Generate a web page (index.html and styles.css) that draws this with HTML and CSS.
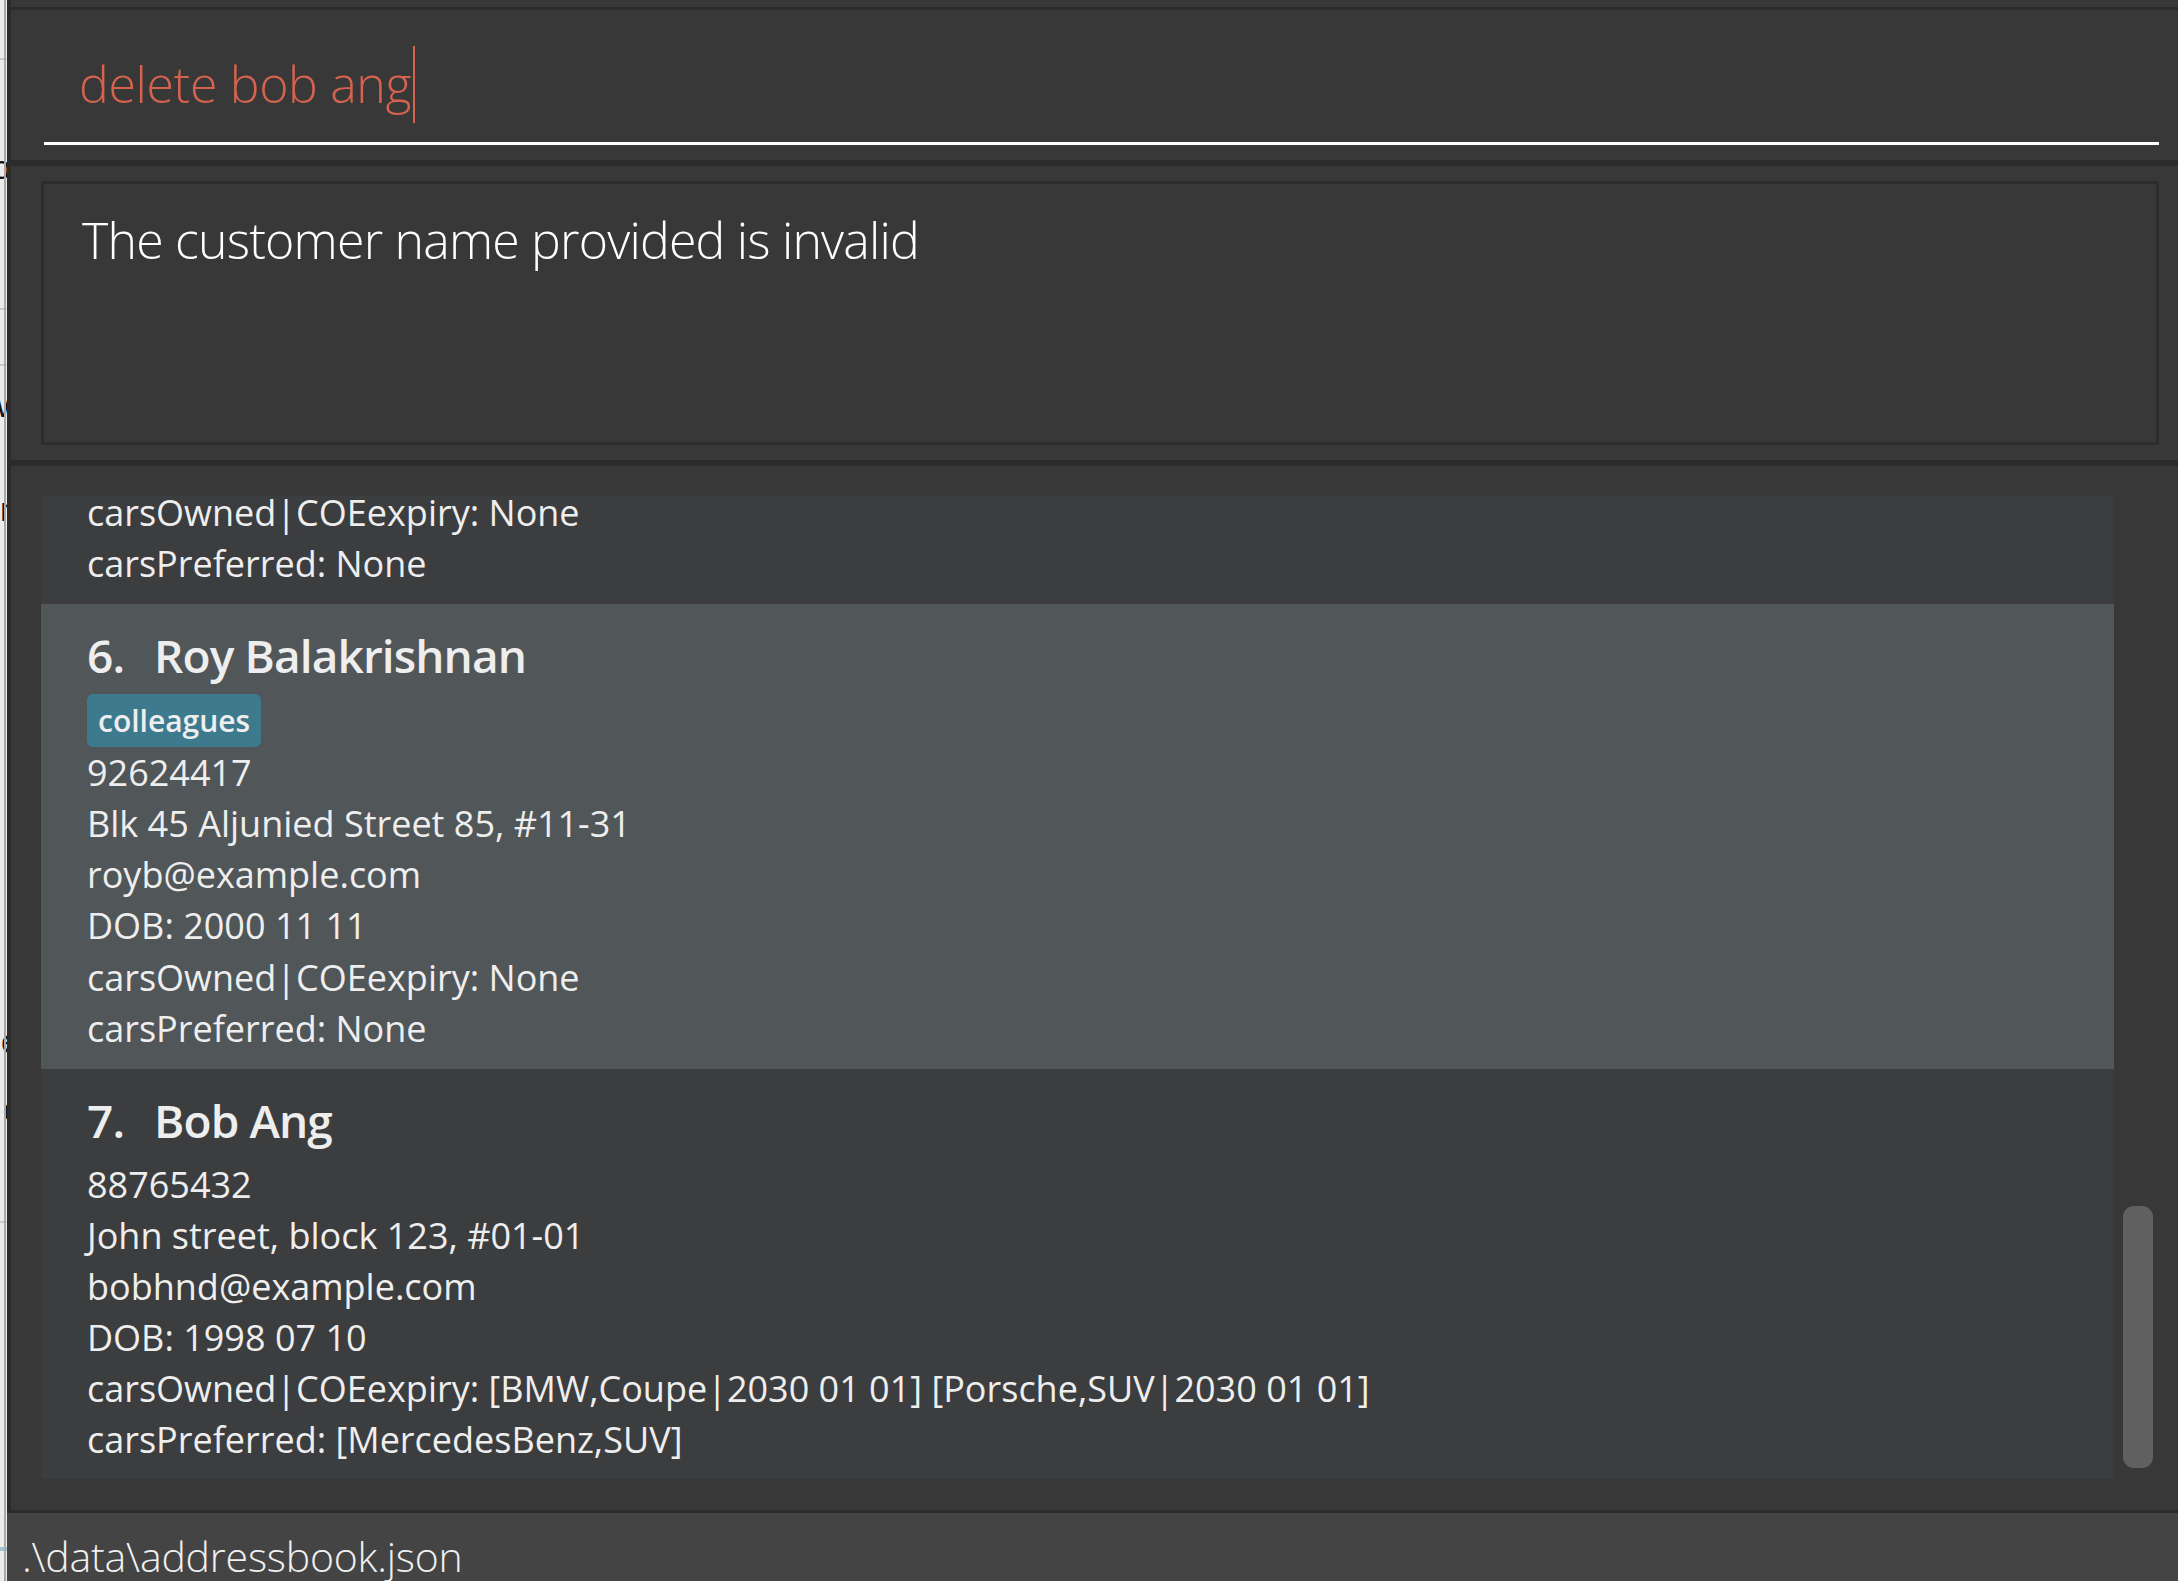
FILE: index.html
```html
<!DOCTYPE html>
<html lang="en">
<head>
<meta charset="utf-8">
<title>Address Book</title>
<link rel="stylesheet" href="styles.css">
</head>
<body>
<div class="desk">
  <div class="behind">
    <div class="behind-line behind-line-a"></div>
    <div class="behind-line behind-line-b"></div>
    <div class="behind-line behind-line-c"></div>
    <div class="behind-line behind-line-d"></div>
    <span class="frag frag-a">o</span>
    <span class="frag frag-b">w</span>
    <span class="frag frag-c">n</span>
    <span class="frag frag-d">e</span>
    <span class="frag frag-e">c</span>
    <div class="behind-blue"></div>
  </div>
  <div class="window">
    <div class="menu-strip"></div>

    <div class="panel command-panel">
      <div class="command-field"><span class="command-text">delete bob ang</span><span class="caret"></span></div>
    </div>

    <div class="panel result-panel">
      <div class="result-box">The customer name provided is invalid</div>
    </div>

    <div class="panel list-panel">
      <div class="list-viewport">
        <div class="list">
          <div class="card card-partial">
            <div class="line">carsOwned|COEexpiry: None</div>
            <div class="line">carsPreferred: None</div>
          </div>
          <div class="card card-selected">
            <div class="name-row"><span class="index">6.</span><span class="name">Roy Balakrishnan</span></div>
            <div class="tags"><span class="tag">colleagues</span></div>
            <div class="line">92624417</div>
            <div class="line">Blk 45 Aljunied Street 85, #11-31</div>
            <div class="line">royb@example.com</div>
            <div class="line">DOB: 2000 11 11</div>
            <div class="line">carsOwned|COEexpiry: None</div>
            <div class="line">carsPreferred: None</div>
          </div>
          <div class="card">
            <div class="name-row"><span class="index">7.</span><span class="name">Bob Ang</span></div>
            <div class="line">88765432</div>
            <div class="line">John street, block 123, #01-01</div>
            <div class="line">bobhnd@example.com</div>
            <div class="line">DOB: 1998 07 10</div>
            <div class="line">carsOwned|COEexpiry: [BMW,Coupe|2030 01 01] [Porsche,SUV|2030 01 01]</div>
            <div class="line">carsPreferred: [MercedesBenz,SUV]</div>
          </div>
        </div>
      </div>
      <div class="scroll-track"><div class="scroll-thumb" style="top: 710px; height: 262px;"></div></div>
    </div>

    <div class="status-bar">.\data\addressbook.json</div>
  </div>
</div>
</body>
</html>
```

FILE: styles.css
```css
html, body {
  margin: 0;
  padding: 0;
}

body {
  background: #ebebeb;
  font-family: "Open Sans", "Noto Sans", sans-serif;
  overflow: hidden;
}

.desk {
  display: flex;
  width: 2178px;
  height: 1581px;
}

/* strip of the window lying behind */
.behind {
  position: relative;
  width: 7px;
  flex: none;
  height: 1581px;
  overflow: hidden;
  background: #ececec;
}

.behind::after {
  content: "";
  position: absolute;
  top: 0;
  bottom: 0;
  right: 1px;
  width: 2px;
  background: #a8a8a8;
}

.behind-line {
  position: absolute;
  left: 0;
  width: 7px;
  height: 2px;
  background: #c9c9c9;
}

.behind-line-a { top: 58px; }
.behind-line-b { top: 308px; }
.behind-line-c { top: 364px; }
.behind-line-d { top: 1221px; }

.behind-blue {
  position: absolute;
  left: 0;
  top: 1547px;
  width: 7px;
  height: 4px;
  background: #9cc6d2;
}

.frag {
  position: absolute;
  font-family: "Liberation Sans", sans-serif;
  font-size: 34px;
  line-height: 1;
  color: #111;
}

.frag-a { top: 150px; right: -4px; }
.frag-b { top: 388px; right: -14px; }
.frag-c { top: 492px; right: -12px; }
.frag-d { top: 1024px; right: -13px; }
.frag-e { top: 1092px; right: -13px; }

/* application window */
.window {
  flex: 1;
  display: flex;
  flex-direction: column;
  background: #2b2b2b;
  height: 1581px;
}

.menu-strip {
  height: 7px;
  margin-left: 4px;
  background: #383838;
  flex: none;
}

.panel {
  margin-left: 4px;
  background: #383838;
  box-sizing: border-box;
  flex: none;
}

.command-panel {
  margin-top: 3px;
  height: 150px;
  padding: 0 19px 0 33px;
}

.command-field {
  height: 135px;
  box-sizing: border-box;
  border-bottom: 3px solid #ffffff;
  padding: 36px 0 0 35px;
  font-size: 50px;
  font-weight: 300;
  line-height: 68px;
  letter-spacing: -0.35px;
  color: #d5634e;
  white-space: nowrap;
  overflow: hidden;
}

.caret {
  display: inline-block;
  width: 2px;
  height: 77px;
  margin-left: 2px;
  background: #d5634e;
  vertical-align: -20px;
}

.result-panel {
  margin-top: 6px;
  height: 294px;
  padding: 15px 19px 15px 30px;
}

.result-box {
  height: 100%;
  box-sizing: border-box;
  border: 3px solid #2d2d2d;
  padding: 22px 38px;
  font-size: 50px;
  font-weight: 300;
  line-height: normal;
  letter-spacing: -0.8px;
  color: #ffffff;
}

.list-panel {
  margin-top: 6px;
  height: 1044px;
  padding: 30px 0 0 30px;
  display: flex;
}

.list-viewport {
  width: 2073px;
  height: 983px;
  overflow: hidden;
  flex: none;
}

.list {
  margin-top: -9px;
}

.card {
  background: #3c3d3f;
  padding: 20px 0 15px 46px;
  color: #eeeeee;
  font-size: 36px;
  font-weight: 400;
  line-height: 51.1px;
  white-space: nowrap;
}

.card-partial {
  padding-top: 0;
}

.card-selected {
  background: #515659;
}

.name-row {
  display: flex;
  gap: 30px;
  font-size: 46px;
  font-weight: 600;
  line-height: normal;
  letter-spacing: -0.9px;
  margin-bottom: 8px;
}

.tags {
  display: flex;
  height: 53px;
}

.tag {
  display: block;
  height: 53px;
  padding: 0 11px;
  border-radius: 6px;
  background: #3d7a8e;
  font-size: 30px;
  font-weight: 600;
  line-height: 53px;
  color: #eeeeee;
}

.scroll-track {
  position: relative;
  flex: 1;
  height: 983px;
}

.scroll-thumb {
  position: absolute;
  left: 9px;
  width: 30px;
  border-radius: 11px;
  background: #606060;
}

.status-bar {
  margin-top: 3px;
  flex: 1;
  background: #444444;
  padding: 15px 0 0 15px;
  font-size: 41px;
  font-weight: 300;
  line-height: normal;
  letter-spacing: -0.2px;
  color: #f0f0f0;
  white-space: nowrap;
  overflow: hidden;
}
```
